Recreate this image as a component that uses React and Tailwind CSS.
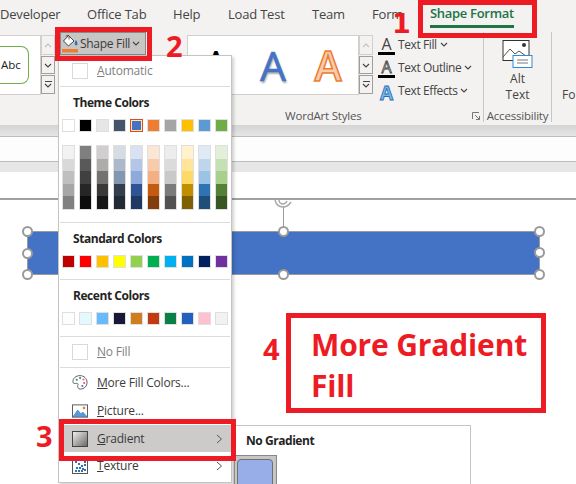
import React from "react";

const theme = ["#ffffff","#000000","#e7e6e6","#44546a","#4472c4","#ed7d31","#a5a5a5","#ffc000","#5b9bd5","#70ad47"];
const shades = [
  ["#f2f2f2","#d9d9d9","#bfbfbf","#a6a6a6","#808080"],
  ["#7f7f7f","#595959","#404040","#262626","#0d0d0d"],
  ["#d0cece","#aeabab","#757171","#3a3838","#171616"],
  ["#d6dce4","#adb9ca","#8497b0","#333f4f","#222b35"],
  ["#d9e2f3","#b4c6e7","#8eaadb","#2f5496","#1f3864"],
  ["#fbe5d5","#f7cbac","#f4b083","#c55a11","#833c0b"],
  ["#ededed","#dbdbdb","#c9c9c9","#7b7b7b","#525252"],
  ["#fff2cc","#fee599","#ffd965","#bf8f00","#7f6000"],
  ["#deeaf6","#bdd6ee","#9cc2e5","#2e74b5","#1f4e79"],
  ["#e2efd9","#c5e0b3","#a8d08d","#538135","#375623"],
];
const standard = ["#c00000","#ff0000","#ffc000","#ffff00","#92d050","#00b050","#00b0f0","#0070c0","#002060","#7030a0"];
const recent = ["#fbfeff","#e3f8ff","#66bbff","#181838","#d07d20","#c23a12","#0a8048","#2060c0","#ffc0d0","#f2f2f2"];

const Chevron = ({ className = "" }) => (
  <svg width="8" height="5" viewBox="0 0 8 5" className={className}>
    <path d="M1 1l3 3 3-3" fill="none" stroke="#444" strokeWidth="1.1" />
  </svg>
);

const Scroller = () => (
  <div className="flex flex-col w-[14px] h-[60px] gap-px">
    <div className="h-[20px] border border-[#d2d0ce] bg-[#f3f2f1] flex items-center justify-center">
      <svg width="8" height="5" viewBox="0 0 8 5"><path d="M1 4l3-3 3 3" fill="none" stroke="#c0c0c0" strokeWidth="1.1" /></svg>
    </div>
    <div className="h-[18px] border border-[#a19f9d] bg-[#f3f2f1] flex items-center justify-center"><Chevron /></div>
    <div className="h-[19px] border border-[#a19f9d] bg-[#f3f2f1] flex flex-col items-center justify-center gap-px">
      <div className="w-[7px] h-px bg-[#444]" />
      <Chevron />
    </div>
  </div>
);

const Swatch = ({ color, selected }) => (
  <div
    className={selected ? "w-[13px] h-[13px] border border-[#e2491d] p-px bg-[#ffe9a8]" : "w-[13px] h-[13px] border border-[#e1dfdd]"}
    style={selected ? undefined : { backgroundColor: color }}
  >
    {selected && <div className="w-full h-full" style={{ backgroundColor: color }} />}
  </div>
);

const SwatchRow = ({ colors, selected }) => (
  <div className="flex gap-[4px] pl-[3px] h-[13px]">
    {colors.map((c, i) => <Swatch key={i} color={c} selected={i === selected} />)}
  </div>
);

const Divider = () => <div className="h-px bg-[#dcdcdc] mx-px" />;

const Header = ({ children }) => (
  <div className="h-[32px] flex items-center pl-[14px] text-[12px] font-bold text-[#252423] tracking-[-0.45px]">{children}</div>
);

const MenuRow = ({ icon, label, h, active, arrow, muted }) => (
  <div className={`flex items-center pl-[13px] ${h} ${active ? "bg-[#cdcbc9]" : ""} ${muted ? "text-[#7f7f7f]" : "text-[#3b3a39]"}`}>
    <div className="w-[16px] h-[16px] flex items-center justify-center">{icon}</div>
    <div className="ml-[9px] text-[12px] flex-1 tracking-[-0.2px]">{label}</div>
    {arrow && (
      <svg width="7" height="10" viewBox="0 0 7 10" className="mr-[8px]"><path d="M1 1l4.500 4L1 9" fill="none" stroke="#555" strokeWidth="1" /></svg>
    )}
  </div>
);

const EmptyBox = () => <div className="w-[16px] h-[16px] border border-[#d9d9d9] bg-white shrink-0" />;

const PaletteIcon = () => (
  <svg width="17" height="17" viewBox="0 0 17 17">
    <path d="M8.500 1.200C4 1.200 1 4 1 7.600c0 2.400 2.400 2 3.600 1.800 1.600-.2 2.200.8 1.600 2.200-.7 1.700.3 3.900 2.600 3.900 4.200 0 7.200-3.200 7.200-7.200 0-3.900-3.200-7.100-7.500-7.100z" fill="#fff" stroke="#555" strokeWidth="1" />
    <circle cx="5" cy="5.600" r="1.100" fill="#2e8b57" />
    <circle cx="8.600" cy="3.800" r="1.100" fill="#2e74b5" />
    <circle cx="12.200" cy="5.400" r="1.100" fill="#e8702a" />
    <circle cx="13" cy="9" r="1.100" fill="#e04a8a" />
    <circle cx="11" cy="12.200" r="1.100" fill="#8a4fb5" />
  </svg>
);
const PictureIcon = () => (
  <svg width="17" height="14" viewBox="0 0 17 14">
    <rect x="0.500" y="0.500" width="16" height="13" fill="#fff" stroke="#555" />
    <path d="M1 13l5-7 3.500 4 2-2 4.500 5z" fill="#5b9bd5" stroke="#2e74b5" strokeWidth="0.6" />
    <rect x="11.500" y="2.500" width="2.500" height="2.500" fill="#ed7d31" />
  </svg>
);
const GradientIcon = () => (
  <svg width="16" height="16" viewBox="0 0 16 16">
    <defs>
      <linearGradient id="gr" x1="0" y1="0" x2="1" y2="1">
        <stop offset="0" stopColor="#f2f2f2" />
        <stop offset="1" stopColor="#666" />
      </linearGradient>
    </defs>
    <rect x="0.500" y="0.500" width="15" height="15" fill="url(#gr)" stroke="#444" />
  </svg>
);
const TextureIcon = () => (
  <svg width="16" height="16" viewBox="0 0 16 16">
    <rect x="0.500" y="0.500" width="15" height="15" fill="#fff" stroke="#555" />
    {[[3,3],[6,5],[9,7],[12,6],[4,9],[7,9],[10,10],[12,11],[9,12],[6,12],[12,3],[3,12]].map(([x,y],i)=>(
      <rect key={i} x={x} y={y} width="2" height="2" fill="#2e74b5" />
    ))}
  </svg>
);
const BucketIcon = () => (
  <svg width="17" height="19" viewBox="0 0 17 19">
    <path d="M6.500 1.500L1.500 7l5 5 5.500-5z" fill="#fff" stroke="#444" strokeWidth="1" />
    <path d="M4 2.500c0-1.500 3-1.500 3 0v3" fill="none" stroke="#444" strokeWidth="0.9" />
    <path d="M14 6c1.500 2 1.500 3 1.500 4a1.400 1.400 0 0 1-2.800 0c0-1 .3-2.500 1.300-4z" fill="#2e74b5" />
    <rect x="0" y="15" width="16" height="3.500" fill="#ed7d31" />
  </svg>
);

const TextTool = ({ label, bar, letterClass }) => (
  <div className="flex items-center h-[23px]">
    <div className="w-[17px] h-[20px] flex flex-col items-center justify-end">
      <span className={`leading-[16px] ${letterClass}`}>A</span>
      {bar && <div className="w-[17px] h-[3px] bg-black shrink-0" />}
    </div>
    <span className="ml-[3px] text-[12px] text-[#444] tracking-[-0.4px]">{label}</span>
    <Chevron className="ml-[3px]" />
  </div>
);

const Handle = ({ pos }) => (
  <div className={`absolute w-[11px] h-[11px] rounded-full bg-white border-2 border-[#9a9a9a] ${pos}`} />
);

const RedBox = ({ pos }) => <div className={`absolute border-[5px] border-[#ed1c24] ${pos}`} />;
const Num = ({ pos, children }) => (
  <div className={`absolute text-[#ed1c24] font-bold text-[29px] leading-none ${pos}`}>{children}</div>
);

export default function App() {
  return (
    <div className="relative w-[576px] h-[484px] overflow-hidden bg-white font-['Open_Sans',sans-serif]">
      {/* Tabs */}
      <div className="flex h-[32px] bg-[#f3f2f1] items-start pt-[5px] text-[13px] text-[#444] tracking-[-0.2px]">
        <div className="w-[87px]">Developer</div>
        <div className="w-[86px]">Office Tab</div>
        <div className="w-[55px]">Help</div>
        <div className="w-[84px]">Load Test</div>
        <div className="w-[60px]">Team</div>
        <div className="w-[58px]">Form</div>
        <div className="text-[#217346] font-semibold border-b-[3px] border-[#217346] h-[23px] leading-[17px] tracking-[-0.3px]">Shape Format</div>
      </div>

      {/* Ribbon */}
      <div className="flex h-[93px] bg-[#f3f2f1]">
        <div className="w-[60px] flex pt-[3px] items-start">
          <div className="w-[41px] h-[60px] bg-white border-y border-r border-[#d2d0ce] flex items-center overflow-hidden">
            <div className="w-[30px] h-[38px] -ml-px rounded-r-[8px] border border-l-0 border-[#70ad47] bg-white flex items-center pl-[2px] text-[11.5px] text-[#222]">Abc</div>
          </div>
          <Scroller />
        </div>
        <div className="w-[127px]">
          <div className="w-[86px] h-[23px] bg-[#c8c6c4] border border-[#8a8886] flex items-center pl-px">
            <BucketIcon />
            <span className="ml-[1px] text-[12px] text-[#3b3a39] tracking-[-0.3px]">Shape Fill</span>
            <Chevron className="ml-[2px]" />
          </div>
        </div>
        <div className="w-[297px] flex flex-col pt-[3px] border-r border-[#c8c6c4] mb-[3px]">
          <div className="flex items-start h-[78px]">
            <div className="w-[172px] h-[60px] bg-white border border-[#d2d0ce] flex items-center">
              <div className="w-[56px] flex justify-center text-[40px] leading-none text-black">A</div>
              <div className="w-[58px] flex justify-center text-[41px] leading-none text-[#4472c4] [-webkit-text-stroke:0.6px_#4472c4] [text-shadow:1px_2px_2px_#aaa]">A</div>
              <div className="w-[52px] flex justify-center text-[41px] leading-none text-[#f8cbad] font-semibold [-webkit-text-stroke:1.5px_#ed7d31]">A</div>
            </div>
            <Scroller />
            <div className="ml-[5px] flex flex-col -mt-[2px]">
              <TextTool label="Text Fill" bar letterClass="text-[16px] text-[#444]" />
              <TextTool label="Text Outline" bar letterClass="text-[16px] text-white [-webkit-text-stroke:0.8px_#444]" />
              <TextTool label="Text Effects" letterClass="text-[19px] font-bold text-[#7db5e5] [-webkit-text-stroke:0.8px_#1f6fb5]" />
            </div>
          </div>
          <div className="flex items-center h-[12px] pl-[98px] pr-[3px] justify-between text-[11.5px] text-[#555] tracking-[-0.2px]">
            <span>WordArt Styles</span>
            <svg width="8" height="8" viewBox="0 0 8 8"><path d="M0.500 7V.5H7M7.500 7.500L3 3M7.500 4v3.500H4" fill="none" stroke="#666" strokeWidth="0.9" /></svg>
          </div>
        </div>
        <div className="w-[68px] flex flex-col items-center pt-[8px] border-r border-[#c8c6c4] mb-[3px]">
          <svg width="31" height="28" viewBox="0 0 31 28">
            <rect x="1" y="0.500" width="26" height="20" fill="#fff" stroke="#333" />
            <path d="M1 17l7-8 5 5 4-3 7 5" fill="none" stroke="#555" />
            <circle cx="22" cy="5" r="2" fill="#333" />
            <rect x="11" y="15.500" width="19" height="12" fill="#fff" stroke="#2e8bd5" />
            <path d="M15 20h11M15 23h11" stroke="#777" />
          </svg>
          <div className="text-[12px] leading-[16px] text-[#444] text-center mt-[3px]">Alt<br />Text</div>
          <div className="mt-auto text-[11.5px] leading-[12px] text-[#555] tracking-[-0.2px]">Accessibility</div>
        </div>
        <div className="flex-1 pl-[10px] pt-[54px] text-[12px] text-[#444]">Fo</div>
      </div>

      {/* Bands */}
      <div className="h-[12px] bg-gradient-to-b from-[#d4d4d4] to-[#e6e6e6] border-b border-[#bcbcbc]" />
      <div className="h-[25px] bg-[#fdfdfd] border-b border-[#bcbcbc]" />
      <div className="h-[10px] bg-[#e6e6e6]" />
      <div className="h-[28px] bg-white border-b-2 border-[#a0a0a0]" />

      {/* Slide shape */}
      <div className="absolute left-[27px] top-[231px] w-[513px] h-[44px] bg-[#4472c4] border border-[#9a9a9a]" />
      <div className="absolute left-[283px] top-[206px] w-px h-[25px] bg-[#9a9a9a]" />
      <svg className="absolute left-[273px] top-[200px]" width="20" height="8" viewBox="0 0 20 8">
        <path d="M2 0c1 4 4 7 8 7 3 0 6-2 8-5M6 0c0 2.500 2 4 4 4s3-1 4-3" fill="none" stroke="#a8a8a8" strokeWidth="1.500" />
      </svg>
      <Handle pos="left-[22px] top-[226px]" />
      <Handle pos="left-[22px] top-[248px]" />
      <Handle pos="left-[22px] top-[269px]" />
      <Handle pos="left-[278px] top-[226px]" />
      <Handle pos="left-[278px] top-[269px]" />
      <Handle pos="left-[534px] top-[226px]" />
      <Handle pos="left-[534px] top-[247px]" />
      <Handle pos="left-[534px] top-[269px]" />

      {/* Shape fill menu */}
      <div className="absolute left-[58px] top-[55px] w-[174px] h-[428px] bg-white border border-[#c4c4c4] shadow-[2px_2px_3px_rgba(0,0,0,0.18)]">
        <div className="h-[30px] flex items-center pl-[13px] text-[12px] text-[#7f7f7f] tracking-[-0.2px]">
          <EmptyBox />
          <span className="ml-[9px]"><u>A</u>utomatic</span>
        </div>
        <Divider />
        <Header>Theme Colors</Header>
        <SwatchRow colors={theme} selected={4} />
        <div className="flex gap-[4px] pl-[3px] mt-[13px]">
          {shades.map((col, i) => (
            <div key={i} className="w-[13px] h-[65px] border border-[#e1dfdd] flex flex-col">
              {col.map((c, j) => <div key={j} className="flex-1" style={{ backgroundColor: c }} />)}
            </div>
          ))}
        </div>
        <div className="h-[12px]" />
        <Divider />
        <Header>Standard Colors</Header>
        <SwatchRow colors={standard} />
        <div className="h-[11px]" />
        <Divider />
        <Header>Recent Colors</Header>
        <SwatchRow colors={recent} />
        <div className="h-[11px]" />
        <Divider />
        <MenuRow h="h-[30px]" muted icon={<EmptyBox />} label={<span><u>N</u>o Fill</span>} />
        <Divider />
        <MenuRow h="h-[29px]" icon={<PaletteIcon />} label={<span><u>M</u>ore Fill Colors...</span>} />
        <MenuRow h="h-[28px]" icon={<PictureIcon />} label={<span><u>P</u>icture...</span>} />
        <MenuRow h="h-[27px]" active arrow icon={<GradientIcon />} label={<span><u>G</u>radient</span>} />
        <MenuRow h="h-[28px]" arrow icon={<TextureIcon />} label={<span><u>T</u>exture</span>} />
      </div>

      {/* Gradient submenu */}
      <div className="absolute left-[233px] top-[425px] w-[238px] h-[70px] bg-white border border-[#c4c4c4]">
        <div className="pl-[12px] pt-[6px] h-[29px] text-[12px] font-bold text-[#252423] tracking-[-0.45px]">No Gradient</div>
        <div className="w-[43px] h-[40px] bg-[#c8c6c4] border border-[#8a8886] pt-[3px] pr-[3px] pl-[2px]">
          <div className="h-full rounded-t-[4px] bg-[#98aee8] border border-[#707070]" />
        </div>
      </div>

      {/* Annotations */}
      <RedBox pos="left-[418px] top-0 w-[119px] h-[38px]" />
      <RedBox pos="left-[55px] top-[27px] w-[97px] h-[34px]" />
      <RedBox pos="left-[59px] top-[419px] w-[177px] h-[42px]" />
      <div className="absolute left-[392px] top-[10px] text-[#ed1c24] font-bold text-[27px] leading-none font-['DejaVu_Sans',sans-serif]">1</div>
      <Num pos="left-[166px] top-[31px]">2</Num>
      <Num pos="left-[36px] top-[421px]">3</Num>
      <Num pos="left-[263px] top-[334px]">4</Num>
      <div className="absolute left-[286px] top-[313px] w-[260px] h-[100px] border-[5px] border-[#ed1c24] pl-[20px] pt-[6px] text-[#ed1c24] font-bold text-[30px] leading-[41px] tracking-[-0.15px]">
        More Gradient Fill
      </div>
    </div>
  );
}
